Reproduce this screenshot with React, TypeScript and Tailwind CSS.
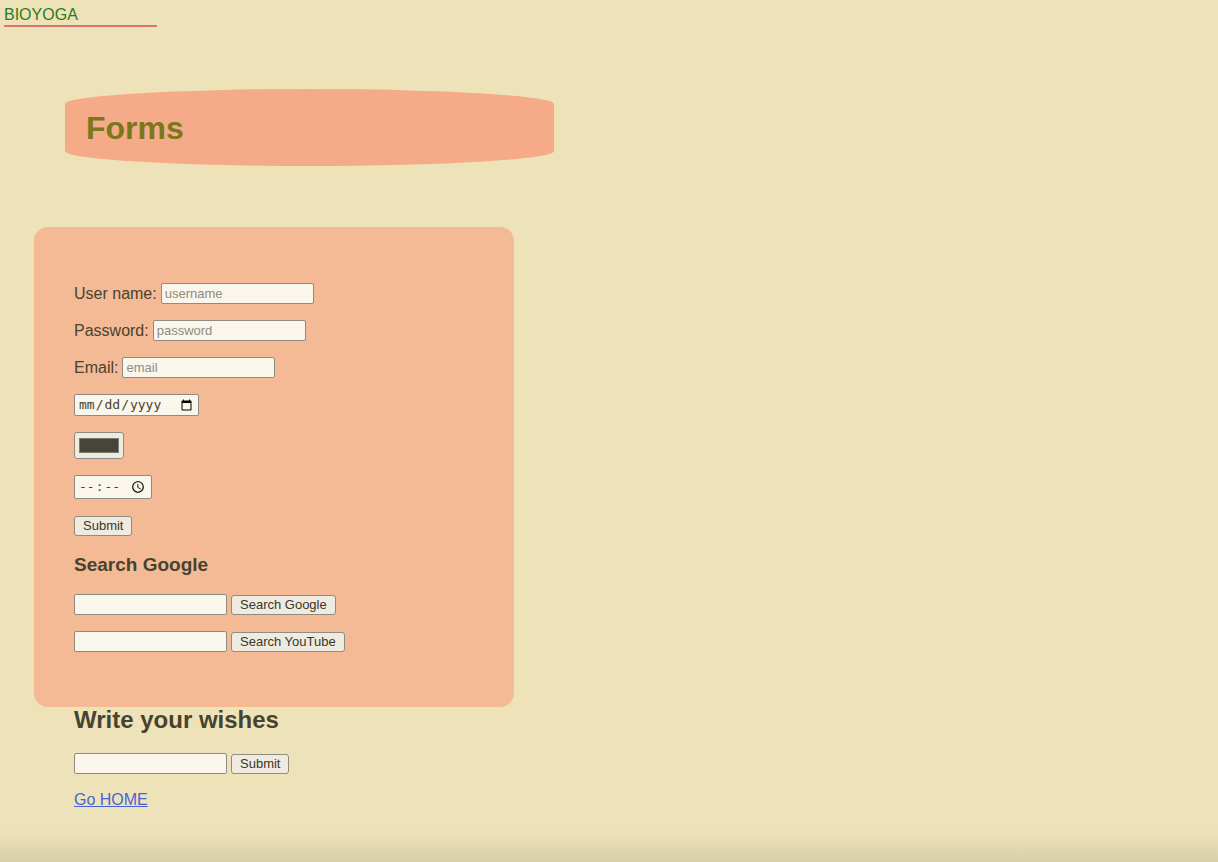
import React from "react";

const inputCls =
  "h-[21px] w-[153px] rounded-[2px] border border-[#8E8B80] bg-[#FAF6EC] px-[3px] text-[13px] text-[#47432F] placeholder:text-[#8F8C80] outline-none";
const btnCls =
  "h-[20px] rounded-[3px] border border-[#8E8B80] bg-[#EFEBE0] px-[8px] text-[13px] leading-[18px] text-[#3A3628]";

export default function App() {
  return (
    <div
      className="relative min-h-[862px] overflow-hidden bg-[#EEE3B8] text-[#47432F]"
      style={{ fontFamily: '"Liberation Sans", Arial, sans-serif' }}
    >
      <div className="ml-[4px] w-[153px] border-b-2 border-[#E07272] pt-[6px] pb-[1px] text-[16px] leading-[18px] text-[#2B7A1F]">
        BIOYOGA
      </div>

      <div className="ml-[65px] mt-[62px] flex h-[77px] w-[489px] items-center rounded-[50%_/_15px] bg-[#F5AA88] pl-[21px]">
        <h1 className="text-[32px] font-bold leading-[36px] text-[#7A781C]">Forms</h1>
      </div>

      <div className="ml-[34px] mt-[61px] h-[480px] w-[480px] rounded-[14px] bg-[#F4BA95] pl-[40px] pt-[56px]">
        <div className="flex h-[21px] items-center gap-[4px] text-[16px]">
          <span>User name:</span>
          <input className={inputCls} placeholder="username" />
        </div>
        <div className="mt-[16px] flex h-[21px] items-center gap-[4px] text-[16px]">
          <span>Password:</span>
          <input className={inputCls} type="password" placeholder="password" />
        </div>
        <div className="mt-[16px] flex h-[21px] items-center gap-[4px] text-[16px]">
          <span>Email:</span>
          <input className={inputCls} type="email" placeholder="email" />
        </div>
        <div className="mt-[16px] flex h-[22px] items-center">
          <input
            type="date"
            className="h-[22px] w-[125px] rounded-[2px] border border-[#8E8B80] bg-[#FAF6EC] px-[3px] text-[13px] text-[#47432F]"
            style={{ fontFamily: '"DejaVu Sans Mono", monospace' }}
          />
        </div>
        <div className="mt-[16px] flex h-[27px] items-center">
          <button className="flex h-[27px] w-[50px] items-center justify-center rounded-[3px] border border-[#8E8B80] bg-[#EFEBE0]">
            <span className="block h-[15px] w-[40px] border border-[#7D7A6E] bg-[#48443A]" />
          </button>
        </div>
        <div className="mt-[16px] flex h-[24px] items-center">
          <input
            type="time"
            className="h-[24px] w-[78px] rounded-[2px] border border-[#8E8B80] bg-[#FAF6EC] px-[3px] text-[13px] text-[#47432F]"
            style={{ fontFamily: '"DejaVu Sans Mono", monospace' }}
          />
        </div>
        <div className="mt-[16px] flex h-[21px] items-center">
          <button className={btnCls}>Submit</button>
        </div>
        <h3 className="mt-[18px] h-[22px] text-[19px] font-bold leading-[22px] text-[#47432F]">
          Search Google
        </h3>
        <div className="mt-[18px] flex h-[21px] items-center gap-[4px]">
          <input className={inputCls} />
          <button className={btnCls}>Search Google</button>
        </div>
        <div className="mt-[16px] flex h-[21px] items-center gap-[4px]">
          <input className={inputCls} />
          <button className={btnCls}>Search YouTube</button>
        </div>
      </div>

      <div className="pl-[74px]">
        <h2 className="mt-[-1px] text-[24px] font-bold leading-[28px] text-[#47432F]">Write your wishes</h2>
        <div className="mt-[19px] flex h-[21px] items-center gap-[4px]">
          <input className={inputCls} />
          <button className={btnCls}>Submit</button>
        </div>
        <a href="#" className="mt-[17px] block w-fit text-[16px] leading-[18px] text-[#4763D9] underline">
          Go HOME
        </a>
      </div>

      <div className="pointer-events-none absolute bottom-0 left-0 right-0 h-[32px] bg-gradient-to-b from-transparent to-[#D8CEA8]" />
    </div>
  );
}
